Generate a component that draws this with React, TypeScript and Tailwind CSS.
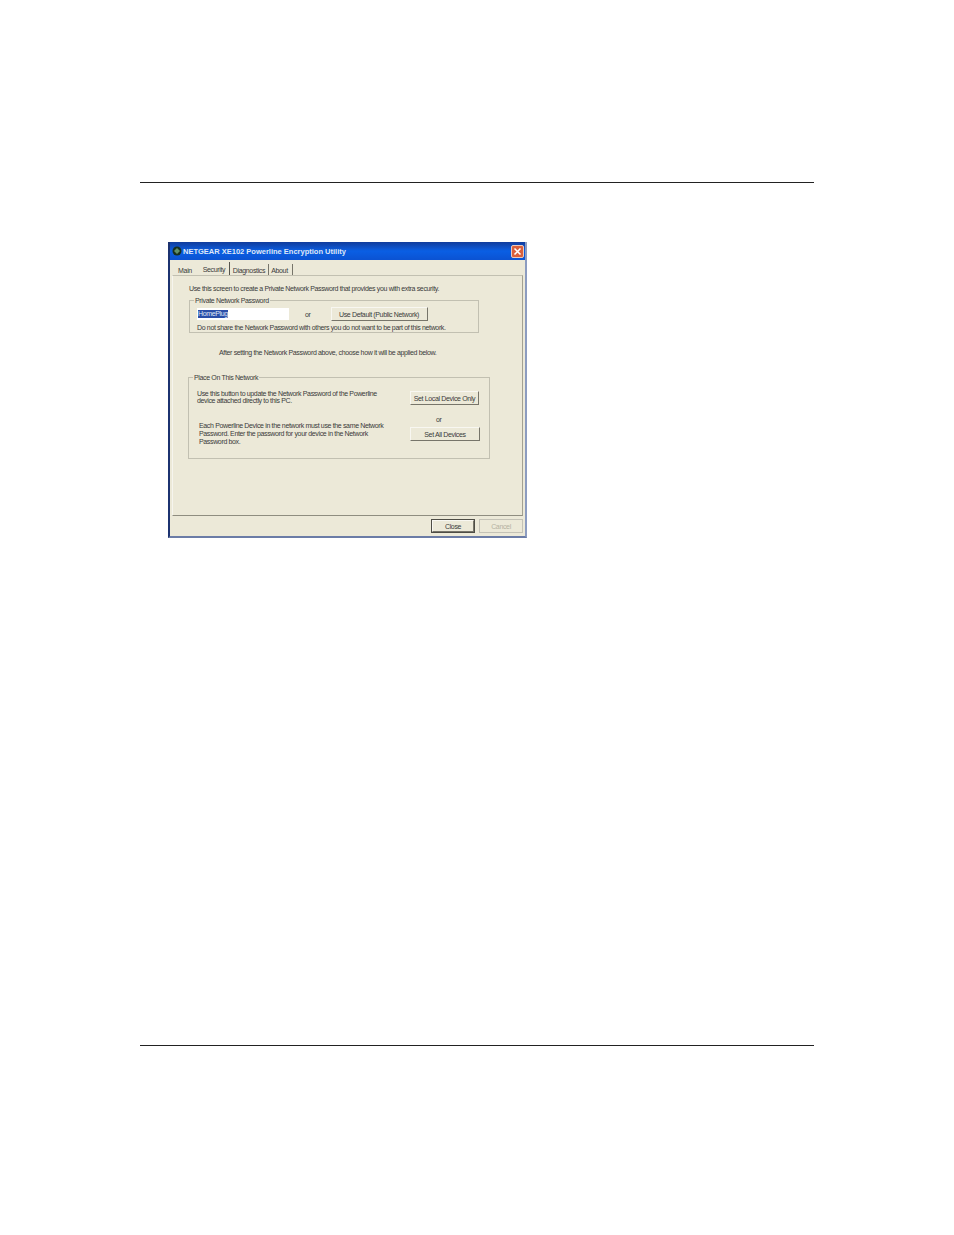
function XpButton({ label, className, disabled }: { label: string; className: string; disabled?: boolean }) {
  return (
    <div
      className={`flex items-center justify-center bg-[#ece9d8] text-[7px] leading-none ${
        disabled
          ? 'border border-[#c4c2b6] text-[#b5b2a2]'
          : 'border border-[#f8f7f1] border-r-[#77756a] border-b-[#77756a] text-[#3a3a3a]'
      } ${className}`}
    >
      {label}
    </div>
  )
}

function GroupBox({ title, className, children }: { title: string; className: string; children: React.ReactNode }) {
  return (
    <fieldset className={`border border-[#c2c0b1] ${className}`}>
      <legend className="ml-[4px] px-[1px] text-[7px] leading-[7px] text-[#3a3a3a]">{title}</legend>
      {children}
    </fieldset>
  )
}

function Tab({ label, className, active }: { label: string; className: string; active?: boolean }) {
  return (
    <div
      className={`flex items-center justify-center text-[7px] leading-none text-[#3a3a3a] ${
        active ? 'h-[13px] border-r border-[#55544c] pt-[1px]' : 'h-[11px] border-r border-[#77756a] pt-[2px]'
      } ${className}`}
    >
      {label}
    </div>
  )
}

export default function App() {
  return (
    <div className="h-[1235px] w-[954px] overflow-hidden bg-white pt-[182px] font-['Liberation_Sans',sans-serif] tracking-[-0.35px]">
      <div className="mx-[140px] h-px bg-[#222]" />

      <div className="ml-[168px] mt-[59px] flex h-[296px] w-[359px] flex-col border-b-2 border-l-2 border-r-2 border-[#6b7ca6] border-l-[#1c3270] border-r-[#8c9cc0] bg-[#ece9d8]">
        <div className="flex h-[18px] items-center bg-gradient-to-b from-[#103c9c] via-[#0a5fe4] to-[#0b52d2] pl-[2px] pr-[1px]">
          <svg width="10" height="10" viewBox="0 0 10 10">
            <circle cx="5" cy="5" r="4.5" fill="#18301f" />
            <path d="M2 5 L5 2 L8 5 L5 8 Z" fill="#5f8f6a" />
          </svg>
          <span className="ml-px whitespace-nowrap pt-[2px] text-[7.5px] font-bold leading-none tracking-normal text-[#dfe7f7]">
            NETGEAR XE102 Powerline Encryption Utility
          </span>
          <div className="ml-auto flex h-[13px] w-[13px] items-center justify-center rounded-[2px] border border-[#e9c9bd] bg-[#d9603c]">
            <svg width="9" height="9" viewBox="0 0 9 9">
              <path d="M1.5 1.5 L7.5 7.5 M7.5 1.5 L1.5 7.5" stroke="#fff" strokeWidth="1.6" />
            </svg>
          </div>
        </div>

        <div className="flex h-[15px] items-end pl-[6px]">
          <Tab label="Main" className="w-[22px] border-r-0 pr-[4px]" />
          <Tab label="Security" active className="ml-[1px] w-[31px]" />
          <Tab label="Diagnostics" className="ml-[2px] w-[37px] pr-[2px]" />
          <Tab label="About" className="ml-[1px] w-[23px] pr-[3px]" />
        </div>

        <div className="mx-[2px] h-[241px] border border-[#c2c0b1] border-b-[#8f8d80] border-l-[#f6f5ee] border-r-[#a3a192] pl-[16px] pt-[9px]">
          <p className="whitespace-nowrap text-[7px] leading-[8px] text-[#3a3a3a]">
            Use this screen to create a Private Network Password that provides you with extra security.
          </p>

          <GroupBox title="Private Network Password" className="mt-[4px] h-[36px] w-[290px]">
            <div className="ml-[7px] mt-[3px] flex items-center">
              <div className="flex h-[12px] w-[92px] items-center bg-white pl-[1px]">
                <span className="bg-[#2b4ea8] text-[7px] leading-[8px] text-[#dfe6f5]">HomePlug</span>
              </div>
              <span className="ml-[16px] text-[7px] leading-none text-[#3a3a3a]">or</span>
              <XpButton label="Use Default (Public Network)" className="ml-[20px] h-[14px] w-[97px]" />
            </div>
            <p className="ml-[7px] mt-[3px] whitespace-nowrap text-[7px] leading-[8px] text-[#3a3a3a]">
              Do not share the Network Password with others you do not want to be part of this network.
            </p>
          </GroupBox>

          <p className="ml-[30px] mt-[16px] whitespace-nowrap text-[7px] leading-[8px] text-[#3a3a3a]">
            After setting the Network Password above, choose how it will be applied below.
          </p>

          <GroupBox title="Place On This Network" className="-ml-px mt-[17px] h-[85px] w-[302px]">
            <div className="flex">
              <div className="ml-[8px] w-[213px] pt-[9px]">
                <p className="whitespace-nowrap text-[7px] leading-[7px] text-[#3a3a3a]">
                  Use this button to update the Network Password of the Powerline
                  <br />
                  device attached directly to this PC.
                </p>
                <p className="ml-[2px] mt-[18px] whitespace-nowrap text-[7px] leading-[8px] text-[#3a3a3a]">
                  Each Powerline Device in the network must use the same Network
                  <br />
                  Password. Enter the password for your device in the Network
                  <br />
                  Password box.
                </p>
              </div>
              <div className="flex flex-col items-start pt-[10px]">
                <XpButton label="Set Local Device Only" className="h-[14px] w-[69px]" />
                <span className="ml-[26px] mt-[11px] text-[7px] leading-[8px] text-[#3a3a3a]">or</span>
                <XpButton label="Set All Devices" className="mt-[3px] h-[14px] w-[70px]" />
              </div>
            </div>
          </GroupBox>
        </div>

        <div className="flex flex-1 items-start justify-end gap-[4px] pr-[2px] pt-[3px]">
          <div className="border border-[#4e4d45]">
            <XpButton label="Close" className="h-[12px] w-[42px]" />
          </div>
          <XpButton label="Cancel" disabled className="h-[14px] w-[44px]" />
        </div>
      </div>

      <div className="mx-[140px] mt-[507px] h-px bg-[#222]" />
    </div>
  )
}
